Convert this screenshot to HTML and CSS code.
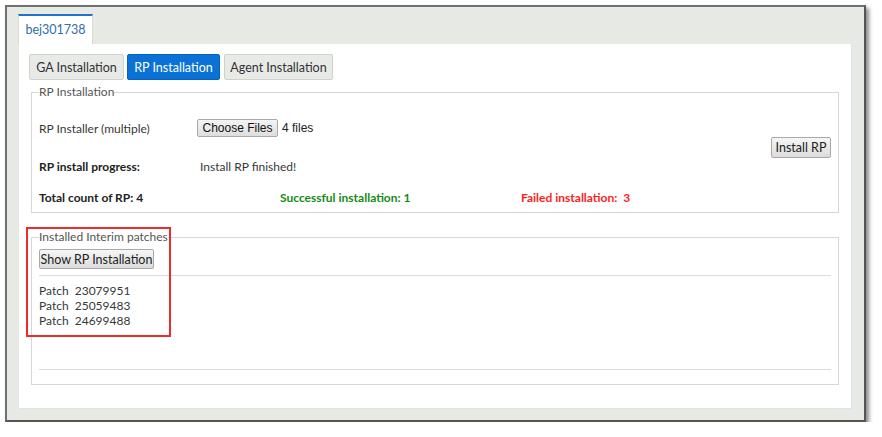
FILE: index.html
```html
<!DOCTYPE html>
<html>
<head>
<meta charset="utf-8">
<link rel="stylesheet" href="styles.css">
</head>
<body>
<div class="frame">
  <div class="tabs"><div class="tab">bej301738</div></div>
  <div class="panel">
    <div class="btn-row">
      <button class="btn btn-ga">GA Installation</button>
      <button class="btn btn-rp active">RP Installation</button>
      <button class="btn btn-agent">Agent Installation</button>
    </div>
    <fieldset class="box box-rp">
      <legend>RP Installation</legend>
      <div class="rp-grid">
        <div class="lbl">RP Installer (multiple)</div>
        <div class="val"><span class="file-btn">Choose Files</span><span class="files">4 files</span></div>
        <div class="install"><button class="sys-btn install-btn">Install RP</button></div>
        <div class="lbl b">RP install progress:</div>
        <div class="val progress">Install RP finished!</div>
      </div>
      <div class="counts">
        <div class="b">Total count of RP: 4</div>
        <div class="b ok">Successful installation: 1</div>
        <div class="b fail">Failed installation:&nbsp; 3</div>
      </div>
    </fieldset>
    <fieldset class="box box-patches">
      <legend>Installed Interim patches</legend>
      <button class="sys-btn show-btn">Show RP Installation</button>
      <div class="sep"></div>
      <ul class="patches">
        <li>Patch&nbsp; 23079951</li>
        <li>Patch&nbsp; 25059483</li>
        <li>Patch&nbsp; 24699488</li>
      </ul>
      <div class="sep sep-bottom"></div>
    </fieldset>
    <div class="annot"></div>
  </div>
</div>
</body>
</html>
```

FILE: styles.css
```css
html, body {
  margin: 0;
  padding: 0;
  background: #ffffff;
}
body {
  font-family: Lato, "Open Sans", sans-serif;
  font-size: 12px;
  color: #383838;
}
.frame {
  margin: 5px 0 0 5px;
  width: 861px;
  height: 417px;
  box-sizing: border-box;
  border: 2px solid #707070;
  border-right-color: #555;
  border-bottom-color: #555;
  background: #e7eae4;
  box-shadow: 3px 3px 4px rgba(0, 0, 0, 0.45);
  padding-top: 7px;
}
.tabs {
  display: flex;
  padding-left: 11px;
}
.tab {
  height: 30px;
  box-sizing: border-box;
  width: 75px;
  background: #ffffff;
  border-top: 2px solid #1f74c9;
  border-left: 1px solid #d9dcd6;
  border-right: 1px solid #d9dcd6;
  color: #2f6cab;
  font-size: 12.5px;
  line-height: 28px;
  text-align: center;
}
.panel {
  position: relative;
  margin-left: 12px;
  width: 833px;
  height: 365px;
  box-sizing: border-box;
  background: #ffffff;
  border-right: 1px solid #dde3ea;
  border-bottom: 1px solid #dde3ea;
  padding: 10px 12px 0 10px;
}
.btn-row {
  display: flex;
  gap: 3px;
  height: 26px;
}
.btn {
  height: 26px;
  box-sizing: border-box;
  border: 1px solid #cfd2cd;
  border-radius: 2px;
  background: #e8eae7;
  color: #333;
  font-family: inherit;
  font-size: 12.5px;
  padding: 0;
  text-align: center;
  white-space: nowrap;
}
.btn-ga { width: 95px; }
.btn-rp { width: 93px; }
.btn-agent { width: 109px; margin-left: 1px; }
.btn.active {
  background: #0a72d6;
  border-color: #0862b8;
  color: #ffffff;
}
.box {
  margin: 0 0 0 2px;
  border: 1px solid #d6d6d6;
  padding: 0 7px;
  min-width: 0;
}
.box legend {
  padding: 0;
  line-height: 16px;
  height: 16px;
  color: #555;
  font-size: 12px;
}
.box-rp {
  margin-top: 4px;
  padding-bottom: 3px;
}
.rp-grid {
  margin-top: 9px;
  display: grid;
  grid-template-columns: 158px 1fr auto;
  grid-template-rows: 38px 38px;
  align-items: center;
}
.install {
  grid-column: 3;
  grid-row: 1 / span 2;
  align-self: center;
}
.lbl { grid-column: 1; white-space: nowrap; }
.val { grid-column: 2; display: flex; align-items: center; }
.progress { padding-left: 3px; }
.b { font-weight: bold; color: #222; }
.file-btn {
  display: inline-block;
  height: 18px;
  box-sizing: border-box;
  width: 81px;
  border: 1px solid #a9a9a9;
  border-radius: 2px;
  background: linear-gradient(#f4f4f4, #dedede);
  font-family: "Liberation Sans", Arial, sans-serif;
  font-size: 12px;
  line-height: 16px;
  text-align: center;
  color: #111;
}
.files {
  margin-left: 4px;
  font-family: "Liberation Sans", Arial, sans-serif;
  font-size: 12px;
  color: #222;
}
.sys-btn {
  box-sizing: border-box;
  border: 1px solid #a9a9a9;
  border-radius: 2px;
  background: linear-gradient(#f6f6f6, #dcdcdc);
  font-family: inherit;
  font-size: 12.5px;
  color: #222;
  padding: 0;
  text-align: center;
  white-space: nowrap;
}
.install-btn {
  width: 60px;
  height: 21px;
  display: block;
  margin-top: 1px;
}
.counts {
  display: grid;
  grid-template-columns: 241px 241px 1fr;
  height: 24px;
  align-items: center;
}
.ok { color: #168a16; }
.fail { color: #ff1c1c; }
.box-patches {
  margin-top: 16px;
  padding-bottom: 14px;
}
.show-btn {
  display: block;
  margin-top: 4px;
  width: 115px;
  height: 20px;
}
.sep {
  margin-top: 6px;
  border-top: 1px solid #dcdcdc;
}
.patches {
  list-style: none;
  margin: 7px 0 0 0;
  padding: 0;
  line-height: 15px;
}
.sep-bottom {
  margin-top: 41px;
}
.annot {
  position: absolute;
  left: 7px;
  top: 183px;
  width: 145px;
  height: 110px;
  box-sizing: border-box;
  border: 2px solid #ee2b2b;
}
```
